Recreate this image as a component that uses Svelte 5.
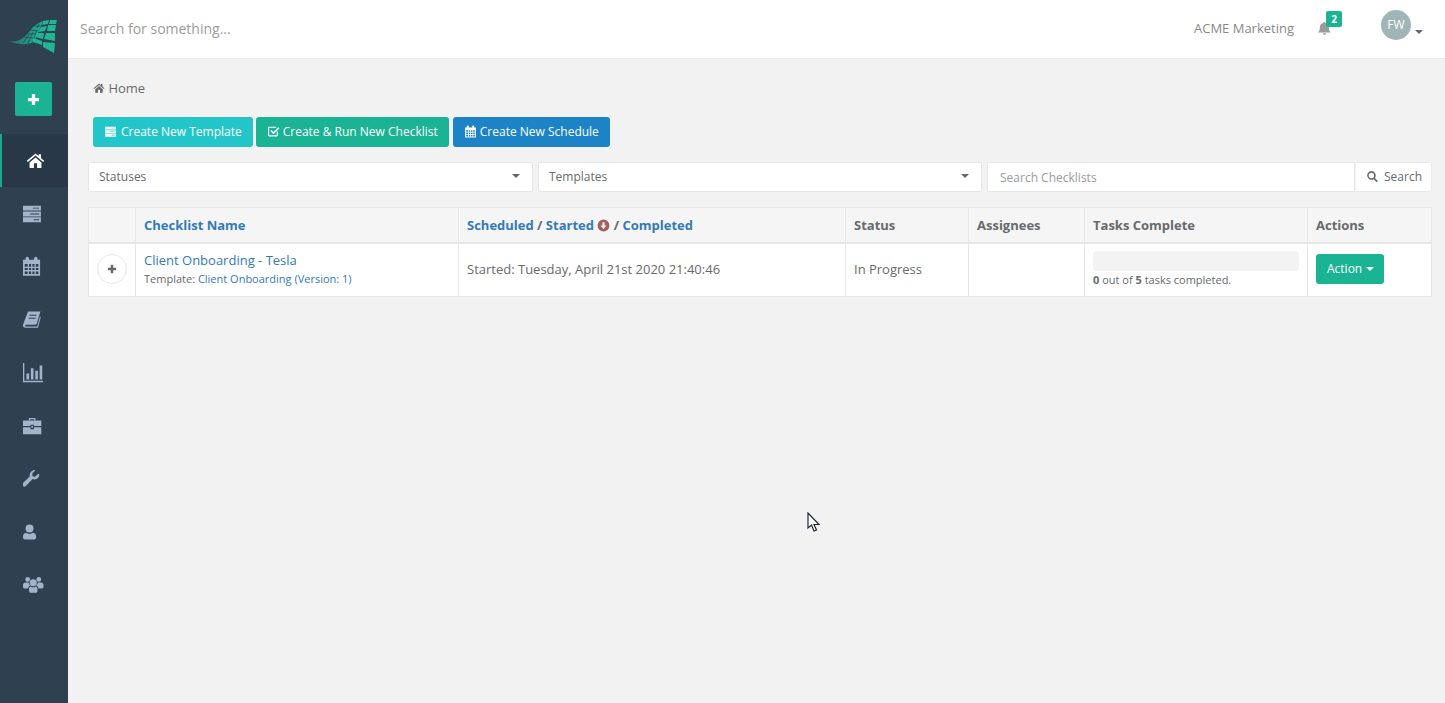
<script>
  // icon shapes, all on a 24x24 box
  const icons = {
    home: "M12 3 1 12.4l1.4 1.6L12 5.8l9.6 8.2 1.4-1.6-4-3.4V4h-3v2.400zM4.500 14.600V21.500H10v-6h4v6h5.500v-6.900L12 8.200z",
    server: "M2 3h20v5.500H2zM13 5.200v1h7v-1zM2 9.500h20V15H2zM10 11.800v1h10v-1zM2 16h20v5.500H2zM14 18.200v1h6v-1z",
    calendar: "M2 4.500h3V3a2 2 0 0 1 4 0v1.500h6V3a2 2 0 0 1 4 0v1.500h3V23H2zM4 9.500v3h3.500v-3zM9 9.500v3h2.500v-3zM13 9.500v3h2.500v-3zM17 9.500v3h3v-3zM4 14v2.500h3.500V14zM9 14v2.500h2.500V14zM13 14v2.500h2.500V14zM17 14v2.500h3V14zM4 18v3h3.500v-3zM9 18v3h2.500v-3zM13 18v3h2.500v-3zM17 18v3h3v-3z",
    book: "M7 2h16l-4.500 15.500a2 2 0 0 1-2 1.500H5c-1 0-1.600.6-1.600 1.300 0 .8.600 1.200 1.600 1.200h14l3.500-13 1 1-3.500 13.500H4c-2.500 0-4-1.500-3.500-4zM9 6v1.500h9V6zM8 10v1.500h9V10z",
    chart: "M1 1h1.500v20.500H24V23H1zM5 13h3v7H5zM10 7h3v13h-3zM15 10h3v10h-3zM20 4h3v16h-3z",
    briefcase: "M8 5V2.500h8V5h-1.500V4h-5v1zM1 5.500h22V12H14v-1.500h-4V12H1zM11 12h2v2h-2zM1 13.500h9V16h4v-2.500h9V22H1z",
    wrench: "M22.500 6.500a6.500 6.500 0 0 1-8.700 6.600L5 22a2.600 2.600 0 0 1-3.700-3.700l8.900-8.800A6.500 6.500 0 0 1 17.500 1.500L13.500 5.500v3.500l3 1.500 4-3.800c.4-.2 1.500-.5 2 .3z",
    user: "M12 2a5.500 5.500 0 1 1 0 11 5.500 5.500 0 0 1 0-11zM7 13.500c1.400 1 3 1.500 5 1.500s3.600-.5 5-1.500c2.500.3 4 2.500 4 5.500v1c0 1.500-1 2.500-2.500 2.500h-13C4 22.500 3 21.500 3 20v-1c0-3 1.500-5.200 4-5.500z",
    users: "M5.500 3.500a2.800 2.800 0 1 1 0 5.600 2.800 2.800 0 0 1 0-5.600zM18.500 3.500a2.800 2.800 0 1 1 0 5.600 2.800 2.800 0 0 1 0-5.600zM12 6a4.200 4.200 0 1 1 0 8.400A4.200 4.200 0 0 1 12 6zM3 10h3.500c.3 1.500 1 2.800 2 3.500-1.500.8-2.300 2-2.500 3.500H2c-1.300 0-2-.7-2-2v-2c0-1.800 1.200-3 3-3zM17.500 10H21c1.800 0 3 1.200 3 3v2c0 1.300-.7 2-2 2h-4c-.2-1.500-1-2.700-2.500-3.500 1-.7 1.700-2 2-3.500zM9 14.500c.8.700 1.800 1 3 1s2.200-.3 3-1c1.800.2 2 2.500 2 4.500s-.7 3-2.500 3h-5C7.700 22 7 21 7 19s.2-4.300 2-4.500z",
    plus: "M9 2h6v7h7v6h-7v7H9v-7H2V9h7z",
    check: "M4 3h13v2H4.500C4 5 4 5.300 4 5.500v13c0 .4.200.5.500.5h13c.4 0 .5-.2.5-.5V13l2-2v8c0 1.500-1 2-2 2H4c-1.500 0-2-1-2-2V5c0-1.300 1-2 2-2zM21 4l2 2-11 11-6-6 2-2 4 4z",
    search: "M10 2a8 8 0 0 1 6.500 12.600l5.500 5.500-2.400 2.400-5.500-5.500A8 8 0 1 1 10 2zm0 3a5 5 0 1 0 0 10 5 5 0 0 0 0-10z",
    bell: "M12 1.500a1.500 1.500 0 0 1 1.500 1.700c3.500.6 5.500 3.500 5.500 7 0 4 1 6 3 8H1.500c2-2 3-4 3-8 0-3.500 2-6.400 5.500-7A1.500 1.500 0 0 1 12 1.500zM9.500 19.500h5a2.500 2.500 0 0 1-5 0z",
    down: "M12 1a11 11 0 1 1 0 22 11 11 0 0 1 0-22zM10 6v6H6.500l5.500 6.500 5.500-6.500H14V6z"
  };

  // left = where the shape starts in its box, size = drawn size in px
  const nav = [
    { name: "home", left: 0, size: 19 },
    { name: "server", left: 2, size: 21.500 },
    { name: "calendar", left: 2, size: 20.500 },
    { name: "book", left: 0.5, size: 18.500 },
    { name: "chart", left: 1, size: 21 },
    { name: "briefcase", left: 1, size: 20 },
    { name: "wrench", left: 1.3, size: 18.500 },
    { name: "user", left: 3, size: 17.500 },
    { name: "users", left: 0, size: 20.500 }
  ];

  // the mark in the top left corner, cell by cell
  const logoCells = [
    "50,20 57,20 56,24 49,24", "48,25 56,25 55,31 47,31", "46,33 55,33 55,41 44,39", "43,42 55,43 54,53 43,47",
    "43,21 49,20 48,24 42,25", "41,27 47,26 45,31 38,32", "37,33 44,33 43,39 35,37", "33,38 42,41 42,45 33,42"
  ];
</script>

{#snippet icon(name, cls)}
  <svg class={cls} viewBox="0 0 24 24" aria-hidden="true"><path fill-rule="evenodd" d={icons[name]} /></svg>
{/snippet}

<div class="layout">
  <aside class="sidebar">
    <div class="logo">
      <svg viewBox="0 0 68 58" width="68" height="58" aria-hidden="true">
        <defs>
          <linearGradient id="tail" gradientUnits="userSpaceOnUse" x1="9" y1="0" x2="38" y2="0">
            <stop offset="0" stop-color="#2b6f6c" />
            <stop offset="1" stop-color="#1ba88c" />
          </linearGradient>
        </defs>
        <path d="M9 41c5 1 10 0 14-3 4-3 7-8 11-12 3-2 6-4 9-5l-2 5-3 7-3 7-3 3c-4 1-8 1.500-12 1-4-.5-8-1.500-11-3z" fill="url(#tail)" />
        <path d="M24 37l9 1M27 34l9 0M30 30l8 1M33 26l7 0M23 43l6-8M28 43l5-11M33 42l4-12M37 28l2-4" stroke="#2f4050" stroke-width=".7" fill="none" />
        {#each logoCells as cell}
          <polygon points={cell} fill="#1fb595" />
        {/each}
      </svg>
    </div>
    <button class="add">{@render icon("plus", "add-icon")}</button>
    <nav>
      {#each nav as item, i}
        <div class="nav-item" class:active={i === 0}>
          <svg class="nav-icon" viewBox="{item.left} 0 24 24" style:width="{item.size}px" style:height="{item.size}px" aria-hidden="true">
            <path fill-rule="evenodd" d={icons[item.name]} />
          </svg>
        </div>
      {/each}
    </nav>
  </aside>

  <main>
    <header class="topbar">
      <span class="topsearch">Search for something...</span>
      <span class="company">ACME Marketing</span>
      <span class="bell">
        {@render icon("bell", "bell-icon")}
        <b class="badge">2</b>
      </span>
      <span class="avatar">FW</span>
      <span class="caret user-caret"></span>
    </header>

    <div class="content">
      <div class="crumb">{@render icon("home", "crumb-icon")} Home</div>

      <div class="actions">
        <button class="btn teal">{@render icon("server", "btn-icon")}Create New Template</button>
        <button class="btn green">{@render icon("check", "btn-icon")}Create &amp; Run New Checklist</button>
        <button class="btn blue">{@render icon("calendar", "btn-icon")}Create New Schedule</button>
      </div>

      <div class="filters">
        <div class="select">Statuses<span class="caret"></span></div>
        <div class="select">Templates<span class="caret"></span></div>
        <div class="searchgroup">
          <div class="searchbox">Search Checklists</div>
          <div class="searchbtn">{@render icon("search", "search-icon")}Search</div>
        </div>
      </div>

      <table>
        <thead>
          <tr>
            <th class="c1"></th>
            <th class="c2"><a href="#name">Checklist Name</a></th>
            <th class="c3">
              <a href="#scheduled">Scheduled</a> / <a href="#started">Started</a>
              {@render icon("down", "sort-icon")} / <a href="#completed">Completed</a>
            </th>
            <th class="c4">Status</th>
            <th class="c5">Assignees</th>
            <th class="c6">Tasks Complete</th>
            <th class="c7">Actions</th>
          </tr>
        </thead>
        <tbody>
          <tr>
            <td><span class="expand">{@render icon("plus", "expand-icon")}</span></td>
            <td>
              <a class="name" href="#tesla">Client Onboarding - Tesla</a>
              <div class="template">Template: <a href="#template">Client Onboarding (Version: 1)</a></div>
            </td>
            <td>Started: Tuesday, April 21st 2020 21:40:46</td>
            <td>In Progress</td>
            <td></td>
            <td class="tasks">
              <div class="progress"></div>
              <div class="done"><b>0</b> out of <b>5</b> tasks completed.</div>
            </td>
            <td><button class="btn green action">Action<span class="caret white"></span></button></td>
          </tr>
        </tbody>
      </table>
    </div>
  </main>

  <svg class="cursor" viewBox="0 0 14 20" width="14" height="20" aria-hidden="true">
    <path d="M1 1v15l3.500-3 2.500 6 2.500-1-2.500-5.500h5z" fill="#fff" stroke="#1f2a38" stroke-width="1.200" />
  </svg>
</div>

<style>
  :global(body) {
    margin: 0;
    background: #f2f2f2;
    font-family: "Open Sans", sans-serif;
    font-size: 13px;
    color: #676a6c;
  }
  .layout {
    display: flex;
    min-height: 703px;
    position: relative;
    overflow: hidden;
  }
  .sidebar {
    width: 68px;
    flex: none;
    background: #2f4050;
  }
  .logo {
    height: 58px;
  }
  .logo svg {
    display: block;
  }
  .add {
    display: flex;
    align-items: center;
    justify-content: center;
    width: 37px;
    height: 34px;
    margin: 24px 0 18px 15px;
    padding: 0;
    border: 0;
    border-radius: 2px;
    background: #1ab394;
  }
  .add-icon {
    width: 13px;
    height: 13px;
    fill: #fff;
  }
  .nav-item {
    display: flex;
    align-items: center;
    height: 53px;
    padding-left: 21px;
    box-sizing: border-box;
    border-left: 2px solid transparent;
  }
  .nav-item.active {
    background: #293846;
    border-left-color: #19aa8d;
    padding-left: 24px;
  }
  .nav-icon {
    fill: #a3b3c9;
  }
  .active .nav-icon {
    fill: #fff;
  }

  main {
    flex: 1;
    min-width: 0;
  }
  .topbar {
    display: flex;
    align-items: center;
    height: 58px;
    background: #fff;
    border-bottom: 1px solid #e7eaec;
    box-sizing: content-box;
    padding-left: 12px;
  }
  .topsearch {
    flex: 1;
    font-size: 14px;
    color: #999c9e;
    padding-bottom: 2px;
  }
  .company {
    color: #888;
    font-size: 13px;
    margin-right: 23px;
    padding-bottom: 2px;
  }
  .bell {
    position: relative;
    display: flex;
    margin-right: 49px;
    margin-top: -1px;
  }
  .bell-icon {
    width: 15px;
    height: 15px;
    fill: #9b9b9b;
  }
  .badge {
    position: absolute;
    left: 9px;
    top: -10px;
    width: 16px;
    height: 16px;
    border-radius: 2px;
    background: #1ab394;
    color: #fff;
    font-size: 10px;
    line-height: 16px;
    text-align: center;
  }
  .avatar {
    width: 30px;
    height: 30px;
    margin-top: -8px;
    border-radius: 50%;
    background: #9fb5b7;
    color: #fff;
    font-size: 12px;
    line-height: 30px;
    text-align: center;
  }
  .caret {
    display: inline-block;
    width: 0;
    height: 0;
    border-top: 4px solid #666;
    border-left: 4px solid transparent;
    border-right: 4px solid transparent;
  }
  .user-caret {
    margin: 5px 22px 0 4px;
  }

  .content {
    padding: 0 13px 0 20px;
  }
  .crumb {
    margin: 20px 0 0 5px;
    line-height: 18px;
    color: #676a6c;
  }
  .crumb-icon {
    width: 12px;
    height: 12px;
    fill: #676a6c;
    vertical-align: -1px;
  }
  .actions {
    display: flex;
    gap: 3px;
    margin: 20px 0 15px 5px;
  }
  .btn {
    height: 30px;
    padding: 0 11px 2px;
    border: 0;
    border-radius: 3px;
    color: #fff;
    font: 400 12px "Open Sans", sans-serif;
    white-space: nowrap;
  }
  .teal {
    background: #23c6c8;
  }
  .green {
    background: #1ab394;
  }
  .blue {
    background: #1c84c6;
    margin-left: 1px;
  }
  .btn-icon {
    width: 13px;
    height: 13px;
    fill: #fff;
    margin-right: 4px;
    vertical-align: -2px;
  }
  .green .btn-icon,
  .blue .btn-icon {
    margin-right: 3px;
  }

  .filters {
    display: flex;
    gap: 5px;
    margin-bottom: 15px;
  }
  .select {
    display: flex;
    align-items: center;
    justify-content: space-between;
    box-sizing: border-box;
    width: 445px;
    height: 30px;
    padding: 0 12px 2px 10px;
    background: #fff;
    border: 1px solid #e5e6e7;
    border-radius: 2px;
    font-size: 12px;
  }
  .select:nth-child(2) {
    width: 444px;
  }
  .searchgroup {
    flex: 1;
    display: flex;
    height: 30px;
  }
  .searchbox {
    flex: 1;
    box-sizing: border-box;
    padding-left: 12px;
    background: #fff;
    border: 1px solid #e5e6e7;
    line-height: 29px;
    font-size: 12px;
    color: #999c9e;
  }
  .searchbtn {
    width: 76px;
    margin-left: 1px;
    box-sizing: border-box;
    padding-left: 10px;
    background: #fff;
    border: 1px solid #e7eaec;
    border-left: 0;
    border-radius: 0 3px 3px 0;
    line-height: 27px;
    font-size: 12px;
  }
  .search-icon {
    width: 13px;
    height: 13px;
    fill: #676a6c;
    margin-right: 5px;
    vertical-align: -2px;
  }

  table {
    width: 1343px;
    table-layout: fixed;
    border-collapse: collapse;
    background: #fff;
  }
  th,
  td {
    border: 1px solid #e7e7e7;
    padding: 0 8px;
    text-align: left;
    vertical-align: middle;
  }
  th {
    height: 35px;
    box-sizing: border-box;
    background: #f5f5f6;
    font-weight: 700;
    border-bottom-width: 2px;
  }
  td {
    height: 54px;
    box-sizing: border-box;
    padding-bottom: 2px;
  }
  td.tasks {
    vertical-align: top;
    padding-top: 7px;
    padding-bottom: 0;
  }
  a {
    color: #337ab7;
    text-decoration: none;
  }
  .c1 { width: 47px; }
  .c2 { width: 323px; }
  .c3 { width: 387px; }
  .c4 { width: 123px; }
  .c5 { width: 116px; }
  .c6 { width: 223px; }
  .c7 { width: 124px; }
  .sort-icon {
    width: 13px;
    height: 13px;
    fill: #a46060;
    vertical-align: -2px;
  }
  .expand {
    display: flex;
    align-items: center;
    justify-content: center;
    width: 30px;
    height: 30px;
    box-sizing: border-box;
    border: 1px solid #e7e7e7;
    border-radius: 50%;
  }
  .expand-icon {
    width: 10px;
    height: 10px;
    fill: #676a6c;
  }
  .name {
    display: block;
    line-height: 18px;
  }
  .template {
    font-size: 11px;
    line-height: 16px;
    margin-top: 2px;
  }
  .progress {
    height: 20px;
    border-radius: 4px;
    background: #f3f3f3;
  }
  .done {
    font-size: 11px;
    line-height: 16px;
    margin-top: 1px;
  }
  .action {
    padding: 0 10px 0 11px;
  }
  .caret.white {
    border-top-color: #fff;
    margin-left: 4px;
    vertical-align: 2px;
    border-width: 4px 4px 0;
  }
  .cursor {
    position: absolute;
    left: 807px;
    top: 512px;
  }
</style>
